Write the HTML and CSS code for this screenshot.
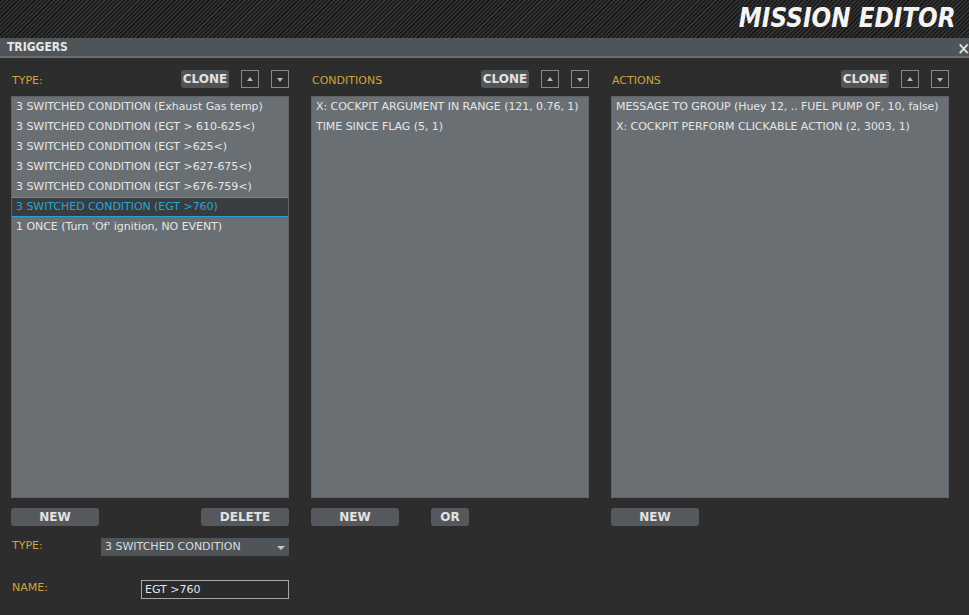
FILE: index.html
```html
<!DOCTYPE html>
<html lang="en">
<head>
  <meta charset="UTF-8">
  <title>Mission Editor | Triggers</title>
  <link rel="stylesheet" href="styles.css">
</head>
<body>
  <div class="top-bar">
    <div class="app-title">MISSION EDITOR</div>
  </div>

  <div class="title-bar">
    <span>TRIGGERS</span>
    <span class="close">&#x2715;</span>
  </div>

  <div class="panels">
    <!-- triggers -->
    <div class="col">
      <div class="col-head">
        <span class="label">TYPE:</span>
        <div class="tools">
          <button class="clone">CLONE</button>
          <button class="arrow up"></button>
          <button class="arrow down"></button>
        </div>
      </div>
      <div class="list">
        <div class="row">3 SWITCHED CONDITION (Exhaust Gas temp)</div>
        <div class="row">3 SWITCHED CONDITION (EGT &gt; 610-625&lt;)</div>
        <div class="row">3 SWITCHED CONDITION (EGT &gt;625&lt;)</div>
        <div class="row">3 SWITCHED CONDITION (EGT &gt;627-675&lt;)</div>
        <div class="row">3 SWITCHED CONDITION (EGT &gt;676-759&lt;)</div>
        <div class="row selected">3 SWITCHED CONDITION (EGT &gt;760)</div>
        <div class="row">1 ONCE (Turn 'Of' ignition, NO EVENT)</div>
      </div>
      <div class="btn-row spread">
        <button class="btn wide">NEW</button>
        <button class="btn wide">DELETE</button>
      </div>
      <div class="field type-field">
        <span class="label">TYPE:</span>
        <div class="select">3 SWITCHED CONDITION<span class="caret"></span></div>
      </div>
      <div class="field name-field">
        <span class="label">NAME:</span>
        <div class="text-input">EGT &gt;760</div>
      </div>
    </div>

    <!-- conditions -->
    <div class="col">
      <div class="col-head">
        <span class="label">CONDITIONS</span>
        <div class="tools">
          <button class="clone">CLONE</button>
          <button class="arrow up"></button>
          <button class="arrow down"></button>
        </div>
      </div>
      <div class="list">
        <div class="row">X: COCKPIT ARGUMENT IN RANGE (121, 0.76, 1)</div>
        <div class="row">TIME SINCE FLAG (5, 1)</div>
      </div>
      <div class="btn-row">
        <button class="btn wide">NEW</button>
        <button class="btn small">OR</button>
      </div>
    </div>

    <!-- actions -->
    <div class="col">
      <div class="col-head">
        <span class="label">ACTIONS</span>
        <div class="tools">
          <button class="clone">CLONE</button>
          <button class="arrow up"></button>
          <button class="arrow down"></button>
        </div>
      </div>
      <div class="list">
        <div class="row">MESSAGE TO GROUP (Huey 12, .. FUEL PUMP OF, 10, false)</div>
        <div class="row">X: COCKPIT PERFORM CLICKABLE ACTION (2, 3003, 1)</div>
      </div>
      <div class="btn-row">
        <button class="btn wide">NEW</button>
      </div>
    </div>
  </div>
</body>
</html>
```

FILE: styles.css
```css
body {
  margin: 0;
  width: 969px;
  height: 615px;
  overflow: hidden;
  background: #2d2d2d;
  font-family: 'DejaVu Sans', sans-serif;
  color: #dcdcdc;
}

.top-bar {
  height: 38px;
  background: repeating-linear-gradient(135deg, #1a1a1a 0, #1a1a1a 1.5px, #323232 1.5px, #323232 3px);
  display: flex;
  justify-content: flex-end;
  align-items: center;
  padding-right: 13px;
}

.app-title {
  font-family: 'DejaVu Sans', sans-serif;
  font-weight: bold;
  font-style: italic;
  font-size: 26px;
  color: #f4f4f4;
  transform: scaleX(0.89);
  transform-origin: right center;
  margin-top: -3px;
}

.title-bar {
  height: 18px;
  background: #4f5458;
  border-bottom: 2px solid #6a6e70;
  display: flex;
  justify-content: space-between;
  align-items: center;
  padding: 0 0 0 7px;
  font-family: 'DejaVu Sans Condensed', 'DejaVu Sans', sans-serif;
  font-weight: bold;
  font-size: 12px;
  color: #e6e6e6;
}

.title-bar .close {
  font-size: 17px;
  font-weight: bold;
  margin-right: -1px;
  color: #e6e6e6;
  margin-top: 3px;
}

.panels {
  display: grid;
  grid-template-columns: 278px 278px 338px;
  column-gap: 22px;
  padding: 12px 20px 0 11px;
}

.col-head {
  height: 18px;
  display: flex;
  justify-content: space-between;
  align-items: center;
}

.label {
  color: #d0a33c;
  font-size: 11px;
  padding-left: 1px;
  margin-top: 2px;
}

.tools {
  display: flex;
  gap: 12px;
}

button {
  font-family: 'DejaVu Sans', sans-serif;
  font-weight: bold;
  color: #e2e2e2;
  border: none;
  padding: 0;
  cursor: pointer;
}

.clone {
  width: 48px;
  height: 18px;
  font-size: 12px;
  background: #4f5458;
  border-radius: 3px;
}

.arrow {
  width: 18px;
  height: 18px;
  background: transparent;
  border: 1px solid #8a8a8a;
  position: relative;
}

.arrow::after {
  content: '';
  position: absolute;
  left: 5px;
  border-left: 3px solid transparent;
  border-right: 3px solid transparent;
}

.arrow.up::after {
  top: 6px;
  border-bottom: 4px solid #b8b8b8;
}

.arrow.down::after {
  top: 7px;
  border-top: 4px solid #b8b8b8;
}

.list {
  margin-top: 8px;
  height: 402px;
  background: #6a6f74;
  box-sizing: border-box;
  border: 1px solid #5e6266;
}

.row {
  height: 20px;
  line-height: 20px;
  padding-left: 4px;
  font-size: 11px;
  letter-spacing: -0.05px;
  color: #e4e6e8;
  white-space: nowrap;
  box-sizing: border-box;
}

.row.selected {
  background: #393d40;
  color: #2aa4d4;
  border-top: 1px solid #2a9fd0;
  border-bottom: 1px solid #2a9fd0;
  line-height: 18px;
}

.btn-row {
  display: flex;
  gap: 32px;
  margin-top: 10px;
}

.btn-row.spread {
  justify-content: space-between;
}

.btn {
  height: 18px;
  font-size: 12px;
  background: #55595d;
  border-radius: 3px;
}

.btn.wide {
  width: 88px;
}

.btn.small {
  width: 38px;
}

.field {
  display: flex;
  align-items: center;
}

.type-field {
  margin-top: 12px;
  height: 18px;
}

.type-field .label {
  margin-top: -4px;
}

.type-field .select {
  margin-left: auto;
  width: 188px;
  height: 18px;
  line-height: 18px;
  box-sizing: border-box;
  background: #4f5458;
  padding-left: 4px;
  font-size: 11px;
  position: relative;
}

.caret {
  position: absolute;
  right: 4px;
  top: 8px;
  border-left: 4px solid transparent;
  border-right: 4px solid transparent;
  border-top: 4px solid #c8c8c8;
}

.name-field {
  margin-top: 24px;
}

.name-field .label {
  margin-top: -4px;
}

.text-input {
  margin-left: auto;
  width: 148px;
  height: 19px;
  line-height: 17px;
  box-sizing: border-box;
  border: 1px solid #a8a8a8;
  background: #2b2b2b;
  padding-left: 3px;
  font-size: 11px;
  color: #e6e6e6;
}
```
